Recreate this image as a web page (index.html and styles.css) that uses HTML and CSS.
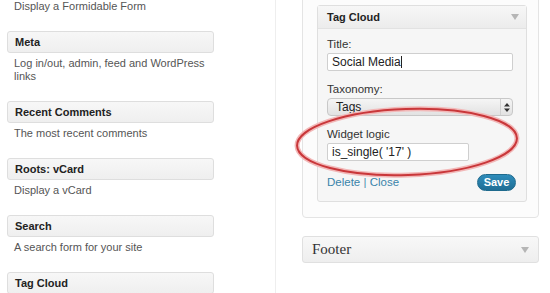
FILE: index.html
```html
<!DOCTYPE html>
<html lang="en">
<head>
    <meta charset="UTF-8">
    <title>Widgets</title>
    <link rel="stylesheet" href="styles.css">
</head>
<body>
    <div class="page">
        <div class="available">
            <p class="desc first">Display a Formidable Form</p>
            <div class="widget">
                <div class="widget-title">Meta</div>
                <p class="desc">Log in/out, admin, feed and WordPress links</p>
            </div>
            <div class="widget">
                <div class="widget-title">Recent Comments</div>
                <p class="desc">The most recent comments</p>
            </div>
            <div class="widget">
                <div class="widget-title">Roots: vCard</div>
                <p class="desc">Display a vCard</p>
            </div>
            <div class="widget">
                <div class="widget-title">Search</div>
                <p class="desc">A search form for your site</p>
            </div>
            <div class="widget">
                <div class="widget-title">Tag Cloud</div>
            </div>
        </div>

        <div class="sidebars">
            <div class="sidebar">
                <div class="open-widget">
                    <div class="open-top">
                        <span>Tag Cloud</span>
                        <span class="arrow"></span>
                    </div>
                    <div class="open-inside">
                        <label>Title:</label>
                        <div class="field">Social Media<span class="caret"></span></div>
                        <label>Taxonomy:</label>
                        <div class="select">
                            <span>Tags</span>
                            <span class="select-btn">
                                <svg width="6" height="9" viewBox="0 0 6 9"><path d="M3 0 L6 3.5 H0 Z M3 9 L6 5.5 H0 Z" fill="#333"/></svg>
                            </span>
                        </div>
                        <label>Widget logic</label>
                        <div class="field short">is_single( '17' )</div>
                        <div class="actions">
                            <span class="links"><a>Delete</a> | <a>Close</a></span>
                            <button class="save">Save</button>
                        </div>
                    </div>
                </div>
            </div>

            <div class="footer-area">
                <span>Footer</span>
                <span class="arrow"></span>
            </div>

            <svg class="mark" width="240" height="80" viewBox="0 0 240 80">
                <ellipse cx="113" cy="38" rx="110" ry="33" transform="rotate(-2 113 38)" fill="none" stroke="#f2b8b8" stroke-width="5"/>
                <ellipse cx="113" cy="38" rx="110" ry="33" transform="rotate(-2 113 38)" fill="none" stroke="#c9373a" stroke-width="2"/>
            </svg>
        </div>
    </div>
</body>
</html>
```

FILE: styles.css
```css
body {
    margin: 0;
    background: #fff;
    font-family: "Liberation Sans", Arial, sans-serif;
    font-size: 11px;
    color: #555;
    overflow: hidden;
}
.page {
    display: flex;
    height: 293px;
}
.available {
    width: 276px;
    border-right: 1px solid #eee;
    padding-left: 7px;
    box-sizing: border-box;
}
.desc {
    margin: 0 0 18px;
    padding: 4px 7px 0;
    width: 196px;
    line-height: 13px;
}
.desc.first {
    padding-top: 0;
}
.widget-title {
    width: 207px;
    height: 22px;
    box-sizing: border-box;
    border: 1px solid #dedede;
    border-radius: 3px;
    background: linear-gradient(#f7f7f7, #efefef);
    color: #222;
    font-weight: bold;
    line-height: 20px;
    padding-left: 7px;
}
.sidebars {
    position: relative;
    padding-left: 26px;
}
.sidebar {
    width: 237px;
    box-sizing: border-box;
    margin-top: -10px;
    border: 1px solid #e4e4e4;
    border-radius: 0 0 4px 4px;
    background: #fcfcfc;
    padding: 14px 13px 15px 14px;
}
.open-widget {
    width: 208px;
    border: 1px solid #dfdfdf;
    border-radius: 3px;
    background: #f6f6f6;
}
.open-top {
    display: flex;
    justify-content: space-between;
    align-items: center;
    height: 22px;
    padding: 0 7px 0 9px;
    background: linear-gradient(#f7f7f7, #ececec);
    border-bottom: 1px solid #e2e2e2;
    color: #222;
    font-weight: bold;
}
.arrow {
    width: 0;
    height: 0;
    border-left: 4px solid transparent;
    border-right: 4px solid transparent;
    border-top: 6px solid #b5b5b5;
}
.open-inside {
    padding: 9px 10px 10px 9px;
    color: #333;
}
.open-inside label {
    display: block;
    font-size: 11.5px;
    line-height: 13px;
    margin-bottom: 2px;
}
.field {
    width: 186px;
    height: 18px;
    box-sizing: border-box;
    border: 1px solid #cfcfcf;
    border-radius: 2px;
    background: #fff;
    font-size: 12px;
    line-height: 16px;
    padding-left: 4px;
    margin-bottom: 12px;
    color: #222;
}
.field.short {
    width: 142px;
    margin-bottom: 12px;
}
.caret {
    display: inline-block;
    width: 1px;
    height: 12px;
    background: #222;
    vertical-align: -2px;
}
.select {
    display: flex;
    justify-content: space-between;
    align-items: center;
    width: 186px;
    height: 18px;
    box-sizing: border-box;
    border: 1px solid #c8c8c8;
    border-radius: 4px;
    background: linear-gradient(#f5f5f5, #e2e2e2);
    font-size: 12px;
    padding-left: 8px;
    margin-bottom: 12px;
    color: #222;
}
.select-btn {
    display: flex;
    align-items: center;
    justify-content: center;
    width: 11px;
    height: 100%;
    border-left: 1px solid #d0d0d0;
}
.actions {
    display: flex;
    justify-content: space-between;
    align-items: center;
    height: 18px;
}
.links {
    color: #4f8eae;
    font-size: 11.5px;
}
.links a {
    color: #3a84aa;
}
.save {
    width: 39px;
    height: 17px;
    padding: 0;
    border: 1px solid #1e6a8d;
    border-radius: 9px;
    background: linear-gradient(#2e8cba, #1f6e95);
    color: #fff;
    font-family: "Liberation Sans", Arial, sans-serif;
    font-size: 11px;
    font-weight: bold;
}
.footer-area {
    display: flex;
    justify-content: space-between;
    align-items: center;
    width: 237px;
    height: 27px;
    box-sizing: border-box;
    margin-top: 18px;
    border: 1px solid #e0e0e0;
    border-radius: 3px;
    background: linear-gradient(#f8f8f8, #eeeeee);
    padding: 0 9px 0 9px;
    font-family: "Liberation Serif", Georgia, serif;
    font-size: 15px;
    color: #333;
}
.mark {
    position: absolute;
    left: 18px;
    top: 104px;
}
```
